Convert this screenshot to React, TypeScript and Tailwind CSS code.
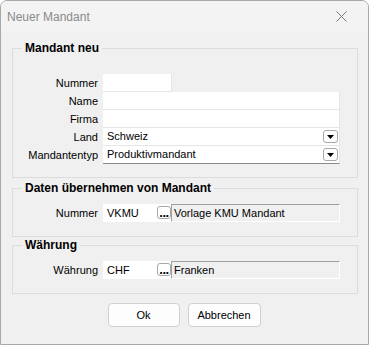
import type { ReactNode } from "react";

function GroupBox({
  title,
  className,
  children,
}: {
  title: string;
  className: string;
  children: ReactNode;
}) {
  return (
    <fieldset className={`border border-[#dcdcdc] pl-0 pr-[17px] ${className}`}>
      <legend className="ml-[9px] px-[3px] text-[12px] leading-4 font-bold text-black">
        {title}
      </legend>
      {children}
    </fieldset>
  );
}

function Label({ children }: { children: ReactNode }) {
  return <div className="h-[18px] text-right leading-[18px] text-black">{children}</div>;
}

function TextField({ className = "" }: { className?: string }) {
  return <div className={`h-[18px] bg-white border-b border-r border-[#e6e6e6] ${className}`} />;
}

function ComboField({ value, dark }: { value: string; dark?: boolean }) {
  return (
    <div
      className={`flex h-[18px] items-center justify-between bg-white border-r border-b pl-[4px] pr-[1px] ${
        dark ? "border-b-[#8c8c8c] border-r-[#e6e6e6]" : "border-[#e6e6e6]"
      }`}
    >
      <span className="leading-[17px]">{value}</span>
      <div className="flex h-[13px] w-[15px] items-center justify-center rounded-[3px] border border-[#a8a8a8] bg-white">
        <svg width="7" height="4" viewBox="0 0 7 4">
          <path d="M0 0h7L3.5 4z" fill="#000" />
        </svg>
      </div>
    </div>
  );
}

function LookupField({ code, text }: { code: string; text: string }) {
  return (
    <div className="flex h-[18px]">
      <div className="flex w-[68px] items-start justify-between bg-white pl-[4px]">
        <span className="leading-[18px]">{code}</span>
        <div className="mt-[2px] flex h-[13px] w-[14px] items-end justify-center overflow-hidden rounded-[3px] border border-[#a8a8a8] bg-white">
          <span className="text-[13px] font-bold leading-[10px] tracking-[-0.5px]">...</span>
        </div>
      </div>
      <div className="flex-1 border-t border-l border-t-[#a0a0a0] border-l-[#a0a0a0] border-b border-r border-b-white border-r-white bg-[#f0f0f0] pl-[2px] leading-[16px]">
        {text}
      </div>
    </div>
  );
}

export default function App() {
  return (
    <div className="h-[345px] w-[369px] overflow-hidden rounded-t-[7px] border border-[#a8a8a8] bg-[#f0f0f0] font-['Liberation_Sans',Arial,sans-serif] text-[11px] text-black">
      <div className="flex h-[31px] items-center justify-between bg-[#f3f3f3] pl-[6px] pr-[21px]">
        <span className="text-[12px] text-[#8a8a8a]">Neuer Mandant</span>
        <svg width="11" height="11" viewBox="0 0 11 11">
          <path d="M0.5 0.5l10 10M10.5 0.5l-10 10" stroke="#7a7a7a" strokeWidth="1" />
        </svg>
      </div>
      <div className="flex flex-col pl-[11px] pr-[10px] pt-[8px]">
        <GroupBox title="Mandant neu" className="pt-[18px] pb-[13px]">
          <div className="grid grid-cols-[85px_1fr] gap-x-[5px]">
            <Label>Nummer</Label>
            <TextField className="w-[69px]" />
            <Label>Name</Label>
            <TextField />
            <Label>Firma</Label>
            <TextField />
            <Label>Land</Label>
            <ComboField value="Schweiz" />
            <Label>Mandantentyp</Label>
            <ComboField value="Produktivmandant" dark />
          </div>
        </GroupBox>
        <GroupBox title="Daten übernehmen von Mandant" className="mt-[2px] pt-[8px] pb-[14px]">
          <div className="grid grid-cols-[85px_1fr] gap-x-[5px]">
            <Label>Nummer</Label>
            <LookupField code="VKMU" text="Vorlage KMU Mandant" />
          </div>
        </GroupBox>
        <GroupBox title="Währung" className="pt-[8px] pb-[14px]">
          <div className="grid grid-cols-[85px_1fr] gap-x-[5px]">
            <Label>Währung</Label>
            <LookupField code="CHF" text="Franken" />
          </div>
        </GroupBox>
        <div className="mt-[9px] flex justify-center gap-[8px] pr-[2px]">
          <button className="h-[24px] w-[72px] rounded-[4px] border border-[#d0d0d0] bg-[#fdfdfd] text-[11px]">
            Ok
          </button>
          <button className="h-[24px] w-[73px] rounded-[4px] border border-[#d0d0d0] bg-[#fdfdfd] text-[11px]">
            Abbrechen
          </button>
        </div>
      </div>
    </div>
  );
}
